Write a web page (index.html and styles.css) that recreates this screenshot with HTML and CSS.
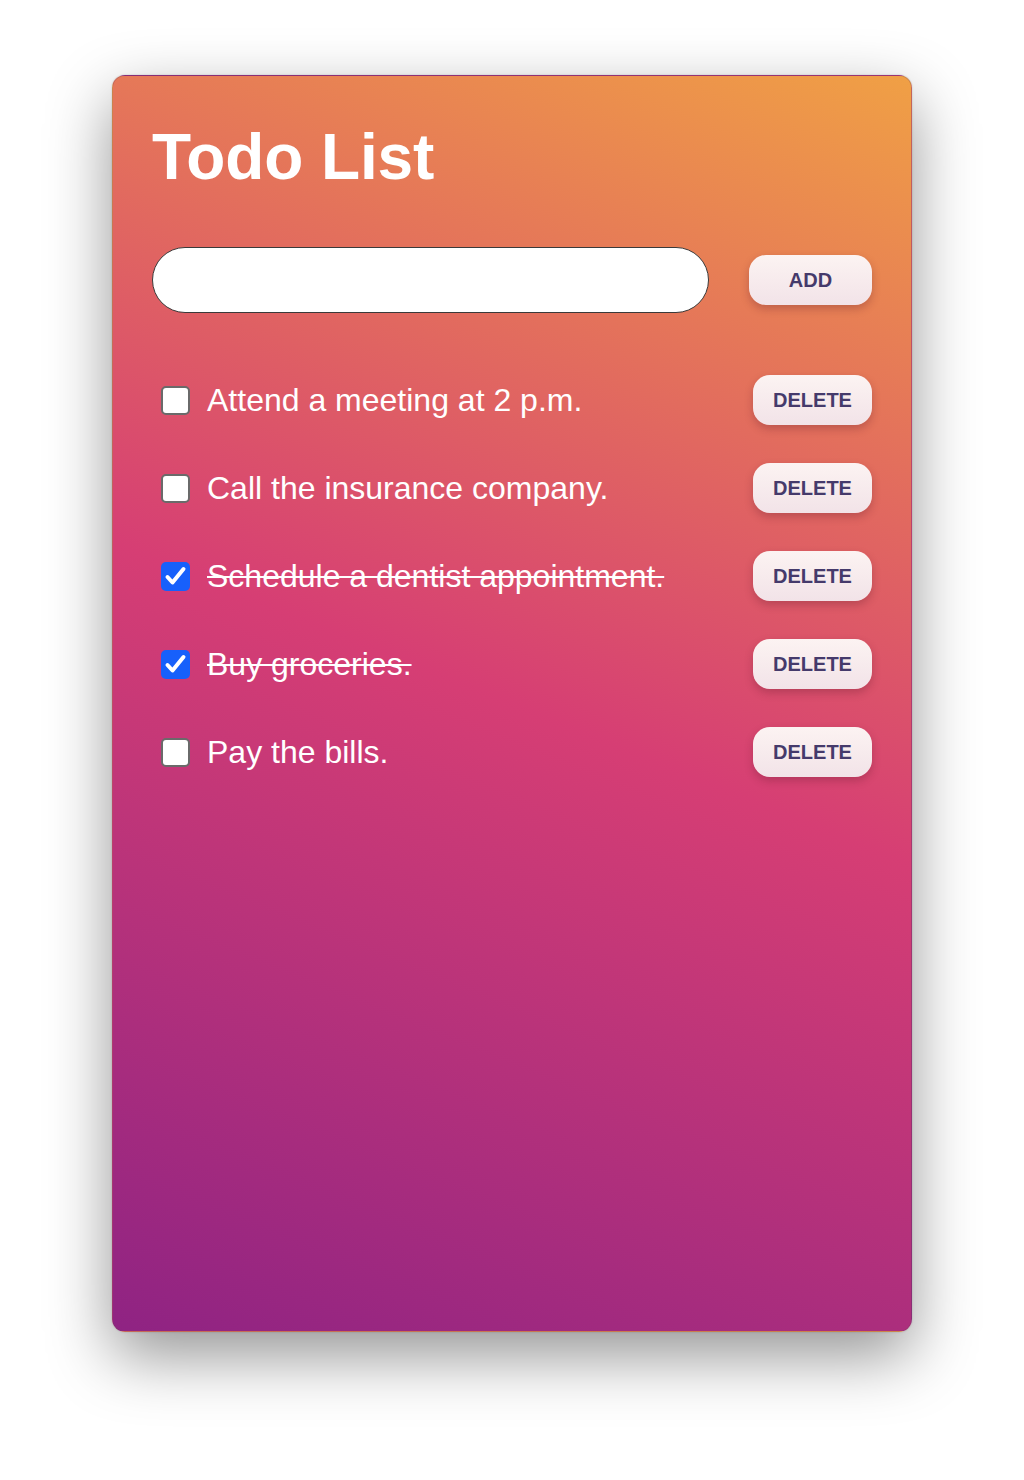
FILE: index.html
```html
<!DOCTYPE html>
<html lang="en">
<head>
<meta charset="utf-8">
<title>Todo List</title>
<link rel="stylesheet" href="styles.css">
</head>
<body>
<main class="card">
  <h1 class="title">Todo List</h1>
  <form class="add-row">
    <input class="add-input" type="text" aria-label="New todo">
    <button class="btn btn-add" type="button">ADD</button>
  </form>
  <ul class="todo-list">
    <li class="todo">
      <span class="box"></span>
      <span class="todo-text">Attend a meeting at 2 p.m.</span>
      <button class="btn btn-delete" type="button">DELETE</button>
    </li>
    <li class="todo">
      <span class="box"></span>
      <span class="todo-text">Call the insurance company.</span>
      <button class="btn btn-delete" type="button">DELETE</button>
    </li>
    <li class="todo done">
      <span class="box checked"><svg viewBox="0 0 29 29" width="29" height="29"><path d="M6.5 15 L11.5 20.5 L22.5 7" fill="none" stroke="#fff" stroke-width="4" stroke-linecap="round" stroke-linejoin="round"/></svg></span>
      <span class="todo-text">Schedule a dentist appointment.</span>
      <button class="btn btn-delete" type="button">DELETE</button>
    </li>
    <li class="todo done">
      <span class="box checked"><svg viewBox="0 0 29 29" width="29" height="29"><path d="M6.5 15 L11.5 20.5 L22.5 7" fill="none" stroke="#fff" stroke-width="4" stroke-linecap="round" stroke-linejoin="round"/></svg></span>
      <span class="todo-text">Buy groceries.</span>
      <button class="btn btn-delete" type="button">DELETE</button>
    </li>
    <li class="todo">
      <span class="box"></span>
      <span class="todo-text">Pay the bills.</span>
      <button class="btn btn-delete" type="button">DELETE</button>
    </li>
  </ul>
</main>
</body>
</html>
```

FILE: styles.css
```css
* { box-sizing: border-box; }

html, body {
  margin: 0;
  padding: 0;
  background: #ffffff;
}

body {
  font-family: "Liberation Sans", Arial, Helvetica, sans-serif;
  padding-top: 75px;
  height: 1480px;
  overflow: hidden;
}

.card {
  width: 800px;
  height: 1257px;
  margin: 0 0 0 112px;
  padding: 49px 39px 40px;
  border-radius: 13px;
  border: 1px solid rgba(120, 70, 90, 0.3);
  background: linear-gradient(22deg, #8f2383 0%, #d63e74 50%, #f0a045 100%);
  box-shadow: 0 24px 64px rgba(0, 0, 0, 0.42), 0 0 2px rgba(0, 0, 0, 0.2);
}

.title {
  margin: 0;
  font-size: 64px;
  line-height: 64px;
  font-weight: 700;
  color: #ffffff;
  letter-spacing: -0.1px;
}

.add-row {
  display: flex;
  align-items: center;
  gap: 40px;
  margin: 58px 0 0;
}

.add-input {
  flex: 1;
  height: 66px;
  border: 1px solid #3a3a3a;
  border-radius: 33px;
  background: #ffffff;
  padding: 0 24px;
  font-size: 24px;
  font-family: inherit;
  outline: none;
}

.btn {
  height: 50px;
  border: none;
  border-radius: 17px;
  background: linear-gradient(180deg, #fcf3f2 0%, #f2e3e8 100%);
  color: #453a6b;
  font-family: "Liberation Sans", Arial, sans-serif;
  font-weight: 700;
  font-size: 20px;
  box-shadow: 0 4px 9px rgba(90, 20, 40, 0.28);
  cursor: pointer;
}

.btn-add {
  width: 123px;
  padding: 0;
}

.btn-delete {
  width: 119px;
  padding: 0;
  margin-left: auto;
  flex: none;
}

.todo-list {
  list-style: none;
  margin: 62px 0 0;
  padding: 0;
  display: flex;
  flex-direction: column;
  gap: 38px;
}

.todo {
  display: flex;
  align-items: center;
  height: 50px;
}

.box {
  flex: none;
  width: 29px;
  height: 29px;
  margin-left: 9px;
  border: 2px solid #6a6a6a;
  border-radius: 5px;
  background: #ffffff;
  display: flex;
  align-items: center;
  justify-content: center;
}

.box.checked {
  border: none;
  background: #1760fb;
}

.box svg { display: block; }

.todo-text {
  margin-left: 17px;
  font-size: 32px;
  color: #ffffff;
  white-space: nowrap;
}

.done .todo-text {
  text-decoration: line-through;
  text-decoration-thickness: 2px;
}
```
